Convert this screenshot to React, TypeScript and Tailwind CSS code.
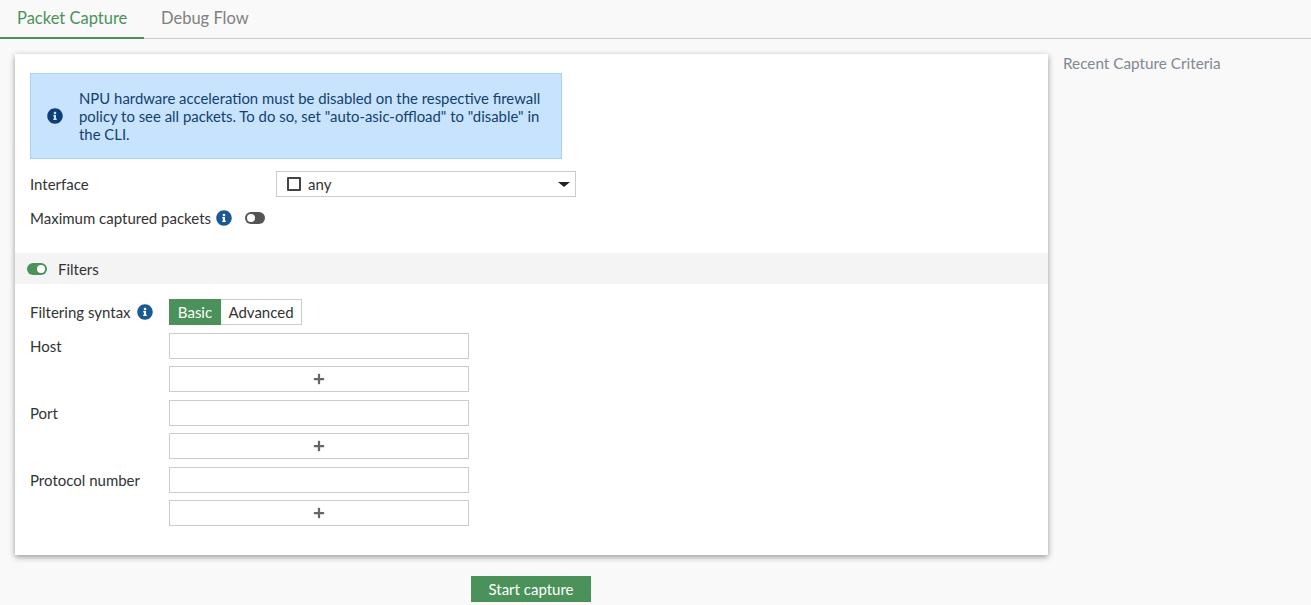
import React from 'react';
import { FaInfoCircle, FaPlus } from 'react-icons/fa';

const FILTER_FIELDS = ['Host', 'Port', 'Protocol number'];

const Toggle: React.FC<{ on?: boolean }> = ({ on }) => (
  <span
    className={`relative inline-block h-[12px] w-[20px] rounded-full ${on ? 'bg-[#4a9259]' : 'bg-[#555555]'}`}
  >
    <span
      className={`absolute top-[2px] h-[8px] w-[8px] rounded-full bg-white ${on ? 'right-[2px]' : 'left-[2px]'}`}
    />
  </span>
);

const FilterField: React.FC<{ label: string }> = ({ label }) => (
  <div className="flex">
    <div className="w-[139px] pt-[3px] leading-[20px]">{label}</div>
    <div className="flex w-[300px] flex-col gap-[7px]">
      <div className="h-[26px] border border-[#cccccc] bg-white" />
      <div className="flex h-[26px] items-center justify-center border border-[#cccccc] bg-white pb-[1px] text-[#666666]">
        <FaPlus size={12} />
      </div>
    </div>
  </div>
);

export default function App() {
  return (
    <div className="h-[605px] overflow-hidden bg-[#f9f9f9] font-['Lato','Liberation_Sans',sans-serif] text-[15px] text-[#333333]">
      <div className="flex h-[39px] border-b border-[#cccccc] text-[16.5px]">
        <div className="h-[39px] w-[144px] border-b-2 border-[#4a9259] pt-[7px] pl-[17px] leading-[22px] text-[#4a9259]">
          Packet Capture
        </div>
        <div className="pt-[7px] pl-[17px] leading-[22px] text-[#808080]">Debug Flow</div>
      </div>

      <div className="flex pt-[15px] pl-[15px]">
        <div className="h-[501px] w-[1033px] bg-white pt-[19px] shadow-[0_2px_6px_rgba(0,0,0,0.4)]">
          <div className="px-[15px]">
            <div className="flex h-[86px] w-[532px] items-center border border-[#a8d3f7] bg-[#c8e3fd] text-[14.9px] text-[#123f6d]">
              <FaInfoCircle size={16} className="ml-[16px] shrink-0 text-[#0d3f7a]" />
              <div className="ml-[16px] w-[470px] leading-[18px]">
                NPU hardware acceleration must be disabled on the respective firewall policy to see all packets. To do so, set "auto-asic-offload" to "disable" in the CLI.
              </div>
            </div>

            <div className="mt-[12px] flex items-center">
              <div className="w-[246px] pt-[1px]">Interface</div>
              <div className="flex h-[26px] w-[300px] items-center border border-[#cccccc] bg-white pr-[5px] pl-[10px]">
                <span className="h-[14px] w-[14px] rounded-[1px] border-2 border-[#444444]" />
                <span className="ml-[7px] pt-[1px]">any</span>
                <span className="ml-auto h-0 w-0 border-x-[6px] border-t-[5px] border-x-transparent border-t-[#222222]" />
              </div>
            </div>

            <div className="mt-[11px] flex h-[20px] items-center">
              <span className="pt-[1px]">Maximum captured packets</span>
              <FaInfoCircle size={16} className="ml-[5px] text-[#1a5a94]" />
              <span className="ml-[13px] flex"><Toggle /></span>
            </div>
          </div>

          <div className="mt-[25px] flex h-[31px] items-center bg-[#f4f4f4] pl-[12px]">
            <span className="flex"><Toggle on /></span>
            <span className="ml-[11px] pt-[1px]">Filters</span>
          </div>

          <div className="px-[15px] pt-[15px]">
            <div className="flex items-center">
              <div className="flex w-[139px] items-center">
                <span className="pt-[1px]">Filtering syntax</span>
                <FaInfoCircle size={16} className="ml-[6px] text-[#1a5a94]" />
              </div>
              <div className="flex h-[26px]">
                <div className="flex w-[52px] items-center justify-center bg-[#4a9259] pt-[1px] text-white">Basic</div>
                <div className="flex w-[81px] items-center justify-center border border-l-0 border-[#cccccc] bg-white">Advanced</div>
              </div>
            </div>
            <div className="mt-[8px] flex flex-col gap-[8px]">
              {FILTER_FIELDS.map((f) => (
                <FilterField key={f} label={f} />
              ))}
            </div>
          </div>
        </div>

        <div className="pl-[15px] text-[15.3px] leading-[18px] text-[#808891]">Recent Capture Criteria</div>
      </div>

      <div className="mt-[21px] ml-[471px] flex h-[26px] w-[120px] items-center justify-center bg-[#4a9259] pt-[1px] text-white">
        Start capture
      </div>
    </div>
  );
}
